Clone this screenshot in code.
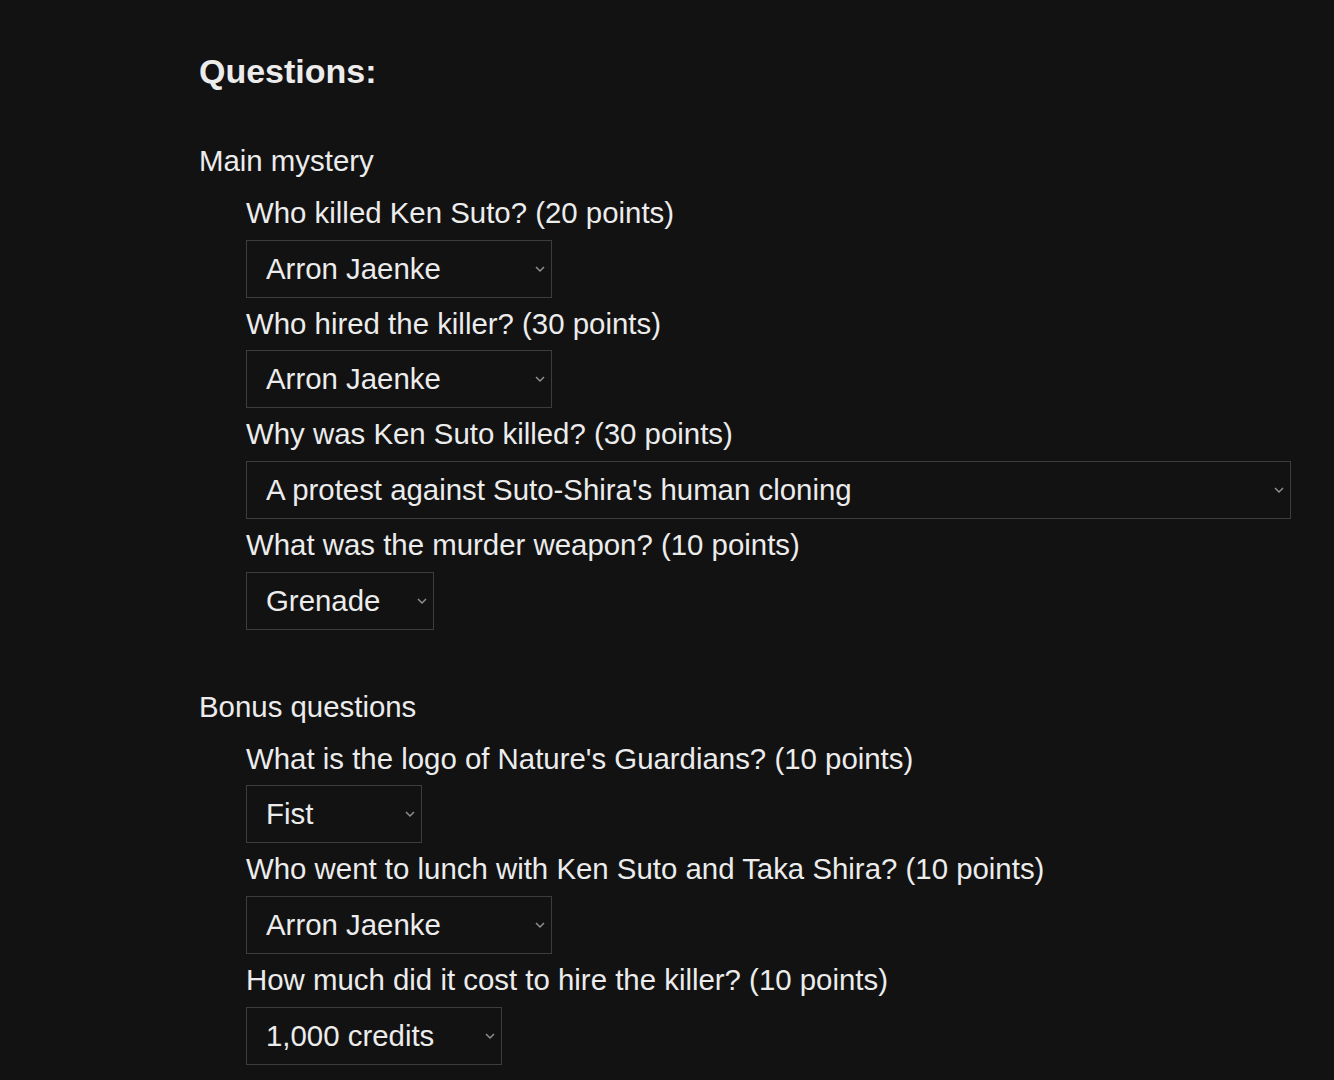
import React from 'react';

type Question = {
  label: string;
  answer: string;
  width: string;
};

const mainMystery: Question[] = [
  { label: 'Who killed Ken Suto? (20 points)', answer: 'Arron Jaenke', width: 'w-[306px]' },
  { label: 'Who hired the killer? (30 points)', answer: 'Arron Jaenke', width: 'w-[306px]' },
  { label: 'Why was Ken Suto killed? (30 points)', answer: "A protest against Suto-Shira's human cloning", width: 'w-[1045px]' },
  { label: 'What was the murder weapon? (10 points)', answer: 'Grenade', width: 'w-[188px]' },
];

const bonus: Question[] = [
  { label: "What is the logo of Nature's Guardians? (10 points)", answer: 'Fist', width: 'w-[176px]' },
  { label: 'Who went to lunch with Ken Suto and Taka Shira? (10 points)', answer: 'Arron Jaenke', width: 'w-[306px]' },
  { label: 'How much did it cost to hire the killer? (10 points)', answer: '1,000 credits', width: 'w-[256px]' },
];

function Chevron() {
  return (
    <svg
      className="pointer-events-none absolute right-[7px] top-1/2 -translate-y-1/2"
      width="10"
      height="7"
      viewBox="0 0 10 7"
      fill="none"
    >
      <path d="M1 1.5l4 4 4-4" stroke="#8f8f8f" strokeWidth="1.5" />
    </svg>
  );
}

function QuestionRow({ q }: { q: Question }) {
  return (
    <div>
      <div className="leading-[52.67px]">{q.label}</div>
      <div className={`relative ${q.width}`}>
        <select
          defaultValue={q.answer}
          className="h-[58px] w-full appearance-none border border-[#3d3d3d] bg-[#121212] pl-[19px] text-[29.4px] text-[#ececec] outline-none"
          style={{ fontFamily: '"Liberation Sans", Arial, sans-serif' }}
        >
          <option>{q.answer}</option>
        </select>
        <Chevron />
      </div>
    </div>
  );
}

export default function App() {
  return (
    <div
      className="min-h-[1080px] bg-[#121212] text-[#ececec] text-[29.4px] pl-[199px] pt-[51px]"
      style={{ fontFamily: '"Liberation Sans", Arial, sans-serif' }}
    >
      <h3 className="text-[34px] font-bold leading-[40px]">Questions:</h3>

      <div className="mt-[44px]">
        <div className="leading-[52px]">Main mystery</div>
        <div className="pl-[47px]">
          {mainMystery.map((q, i) => (
            <QuestionRow key={i} q={q} />
          ))}
        </div>
      </div>

      <div className="mt-[51px]">
        <div className="leading-[52px]">Bonus questions</div>
        <div className="pl-[47px]">
          {bonus.map((q, i) => (
            <QuestionRow key={i} q={q} />
          ))}
        </div>
      </div>
    </div>
  );
}
